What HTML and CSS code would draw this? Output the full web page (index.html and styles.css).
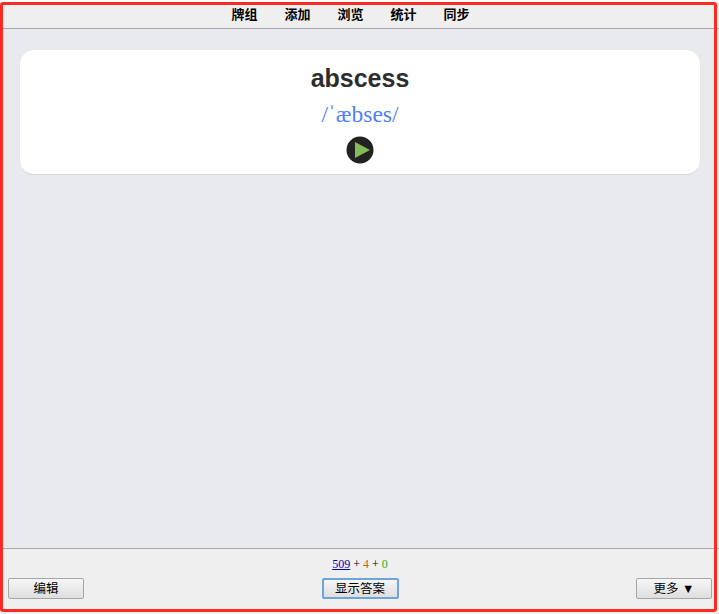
FILE: index.html
```
<!DOCTYPE html>
<html lang="zh">
<head>
<meta charset="utf-8">
<title>abscess</title>
<link rel="stylesheet" href="styles.css">
</head>
<body>
<div class="app">
  <nav class="topbar">
    <a class="nav-link">牌组</a>
    <a class="nav-link">添加</a>
    <a class="nav-link">浏览</a>
    <a class="nav-link">统计</a>
    <a class="nav-link">同步</a>
  </nav>
  <main class="reviewer">
    <section class="card">
      <h1 class="word">abscess</h1>
      <p class="phonetic">/ˈæbses/</p>
      <svg class="play" width="28" height="28" viewBox="0 0 28 28" aria-label="play">
        <circle cx="14" cy="14" r="13.5" fill="#222222"/>
        <path d="M9 6 L24 14 L9 22 Z" fill="#85bb56"/>
      </svg>
    </section>
  </main>
  <footer class="bottombar">
    <div class="counts"><u class="c-new">509</u> + <span class="c-learn">4</span> + <span class="c-due">0</span></div>
    <div class="actions">
      <button class="btn">编辑</button>
      <button class="btn btn-primary">显示答案</button>
      <button class="btn">更多 ▼</button>
    </div>
  </footer>
</div>
<div class="frame"></div>
</body>
</html>
```

FILE: styles.css
```
html, body {
  margin: 0;
  padding: 0;
  height: 100%;
  background: #ffffff;
  overflow: hidden;
}
.app {
  height: 612px;
  margin-top: 2px;
  display: flex;
  flex-direction: column;
  font-family: "Liberation Sans", "Noto Sans CJK SC", sans-serif;
}
.topbar {
  box-sizing: border-box;
  height: 27px;
  background: #efefef;
  border-bottom: 1px solid #a8a8a8;
  display: flex;
  justify-content: center;
  gap: 27px;
  padding: 4px 18px 0 0;
  font-size: 13px;
  font-weight: bold;
  line-height: 17px;
  color: #000000;
}
.reviewer {
  flex: 1;
  background: #e9eaed;
  padding: 21px 19px 0 20px;
}
.card {
  box-sizing: border-box;
  height: 125px;
  background: #ffffff;
  border-radius: 14px;
  border-bottom: 1px solid #d8d8d8;
  box-shadow: 0 0 1px #d8d8d8;
  display: flex;
  flex-direction: column;
  align-items: center;
  padding-top: 14px;
}
.word {
  margin: 0;
  font-size: 25px;
  line-height: 29px;
  font-weight: bold;
  color: #2d2d2d;
}
.phonetic {
  margin: 8px 0 0;
  font-family: "Liberation Serif", serif;
  font-size: 23.5px;
  line-height: 26px;
  color: #4d7ff5;
}
.play {
  display: block;
  margin-top: 9px;
}
.bottombar {
  box-sizing: border-box;
  height: 66px;
  background: #efefef;
  border-top: 1px solid #a8a8a8;
  padding: 8px 7px 0 8px;
}
.counts {
  text-align: center;
  font-family: "Liberation Serif", serif;
  font-size: 12px;
  line-height: 14px;
  color: #000000;
}
.c-new { color: #0000b0; }
.c-learn { color: #c8641e; }
.c-due { color: #22b022; }
.actions {
  display: flex;
  justify-content: space-between;
  margin-top: 7px;
}
.btn {
  box-sizing: border-box;
  width: 76px;
  height: 21px;
  padding: 1px 0 0;
  border: 1px solid #a6a6a6;
  border-radius: 2px;
  background: linear-gradient(#f6f6f6, #dedede);
  font-family: "Liberation Sans", "Noto Sans CJK SC", sans-serif;
  font-size: 12.5px;
  line-height: 17px;
  color: #000000;
}
.btn-primary {
  width: 77px;
  border: 2px solid #6ba5dc;
}
.frame {
  position: absolute;
  left: 0;
  top: 2px;
  width: 717px;
  height: 610px;
  box-sizing: border-box;
  border: 3px solid #ff2a24;
  border-radius: 3px;
  pointer-events: none;
}
```
